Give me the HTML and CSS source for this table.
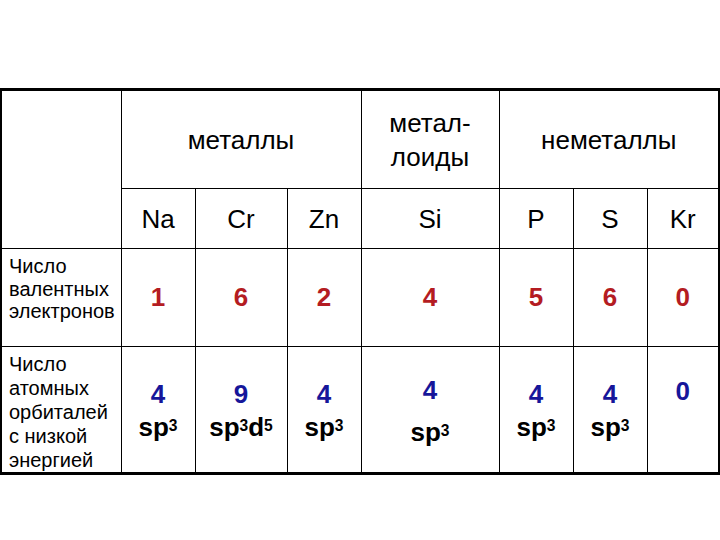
FILE: index.html
```html
<!DOCTYPE html>
<html lang="ru">
<head>
<meta charset="utf-8">
<title>Валентные электроны</title>
<link rel="stylesheet" href="styles.css">
</head>
<body>
<div class="page">
  <table class="grid">
    <colgroup>
      <col class="c-label">
      <col class="c-na">
      <col class="c-cr">
      <col class="c-zn">
      <col class="c-si">
      <col class="c-p">
      <col class="c-s">
      <col class="c-kr">
    </colgroup>
    <tr class="r-group">
      <td rowspan="2"></td>
      <td colspan="3" class="group">металлы</td>
      <td class="group">метал-<br>лоиды</td>
      <td colspan="3" class="group">неметаллы</td>
    </tr>
    <tr class="r-el">
      <td class="el">Na</td>
      <td class="el">Cr</td>
      <td class="el">Zn</td>
      <td class="el">Si</td>
      <td class="el">P</td>
      <td class="el">S</td>
      <td class="el">Kr</td>
    </tr>
    <tr class="r-val">
      <td class="label">Число<br>валентных<br>электронов</td>
      <td class="num red">1</td>
      <td class="num red">6</td>
      <td class="num red">2</td>
      <td class="num red">4</td>
      <td class="num red">5</td>
      <td class="num red">6</td>
      <td class="num red">0</td>
    </tr>
    <tr class="r-orb">
      <td class="label label-tall">Число<br>атомных<br>орбиталей<br>с низкой<br>энергией</td>
      <td class="orb"><span class="blue">4</span><br>sp<sup>3</sup></td>
      <td class="orb"><span class="blue">9</span><br>sp<sup>3</sup>d<sup>5</sup></td>
      <td class="orb"><span class="blue">4</span><br>sp<sup>3</sup></td>
      <td class="orb orb-wide"><span class="blue">4</span><br>sp<sup>3</sup></td>
      <td class="orb"><span class="blue">4</span><br>sp<sup>3</sup></td>
      <td class="orb"><span class="blue">4</span><br>sp<sup>3</sup></td>
      <td class="orb orb-single"><span class="blue">0</span></td>
    </tr>
  </table>
</div>
</body>
</html>
```
FILE: styles.css
```css
html, body {
  margin: 0;
  padding: 0;
  background: #ffffff;
}
body {
  font-family: "Liberation Sans", Arial, sans-serif;
  color: #000000;
}
.page {
  width: 720px;
  height: 540px;
  padding-top: 88px;
  box-sizing: border-box;
}
.grid {
  width: 718px;
  table-layout: fixed;
  border-collapse: collapse;
  border-top: 3px solid #000;
  border-bottom: 3px solid #000;
  border-left: 2px solid #000;
  border-right: 2px solid #000;
}
.grid td {
  border: 1px solid #000;
  padding: 0;
  text-align: center;
  vertical-align: middle;
}
.c-label { width: 120px; }
.c-na { width: 74px; }
.c-cr { width: 92px; }
.c-zn { width: 74px; }
.c-si { width: 138px; }
.c-p { width: 74px; }
.c-s { width: 74px; }
.c-kr { width: 72px; }

.r-group { height: 99px; }
.r-el { height: 60px; }
.r-val { height: 98px; }
.r-orb { height: 127px; }

.group {
  font-size: 26px;
  line-height: 34px;
}
.el {
  font-size: 26px;
  line-height: 30px;
}
.grid td.label {
  text-align: left;
  vertical-align: top;
  font-size: 20px;
  line-height: 22.5px;
  padding: 6px 0 0 7px;
}
.grid td.label-tall {
  line-height: 24px;
  padding-top: 5px;
}
.num {
  font-size: 26px;
  font-weight: bold;
}
.red { color: #b41c22; }
.blue { color: #16169a; }
.grid td.orb {
  vertical-align: top;
  padding-top: 31px;
  font-size: 26px;
  font-weight: bold;
  line-height: 33px;
}
.grid td.orb-wide {
  padding-top: 22px;
  line-height: 42px;
}
.grid td.orb-single {
  padding-top: 28px;
}
sup {
  font-size: 0.6em;
  line-height: 0;
  vertical-align: 0.3em;
}
```
